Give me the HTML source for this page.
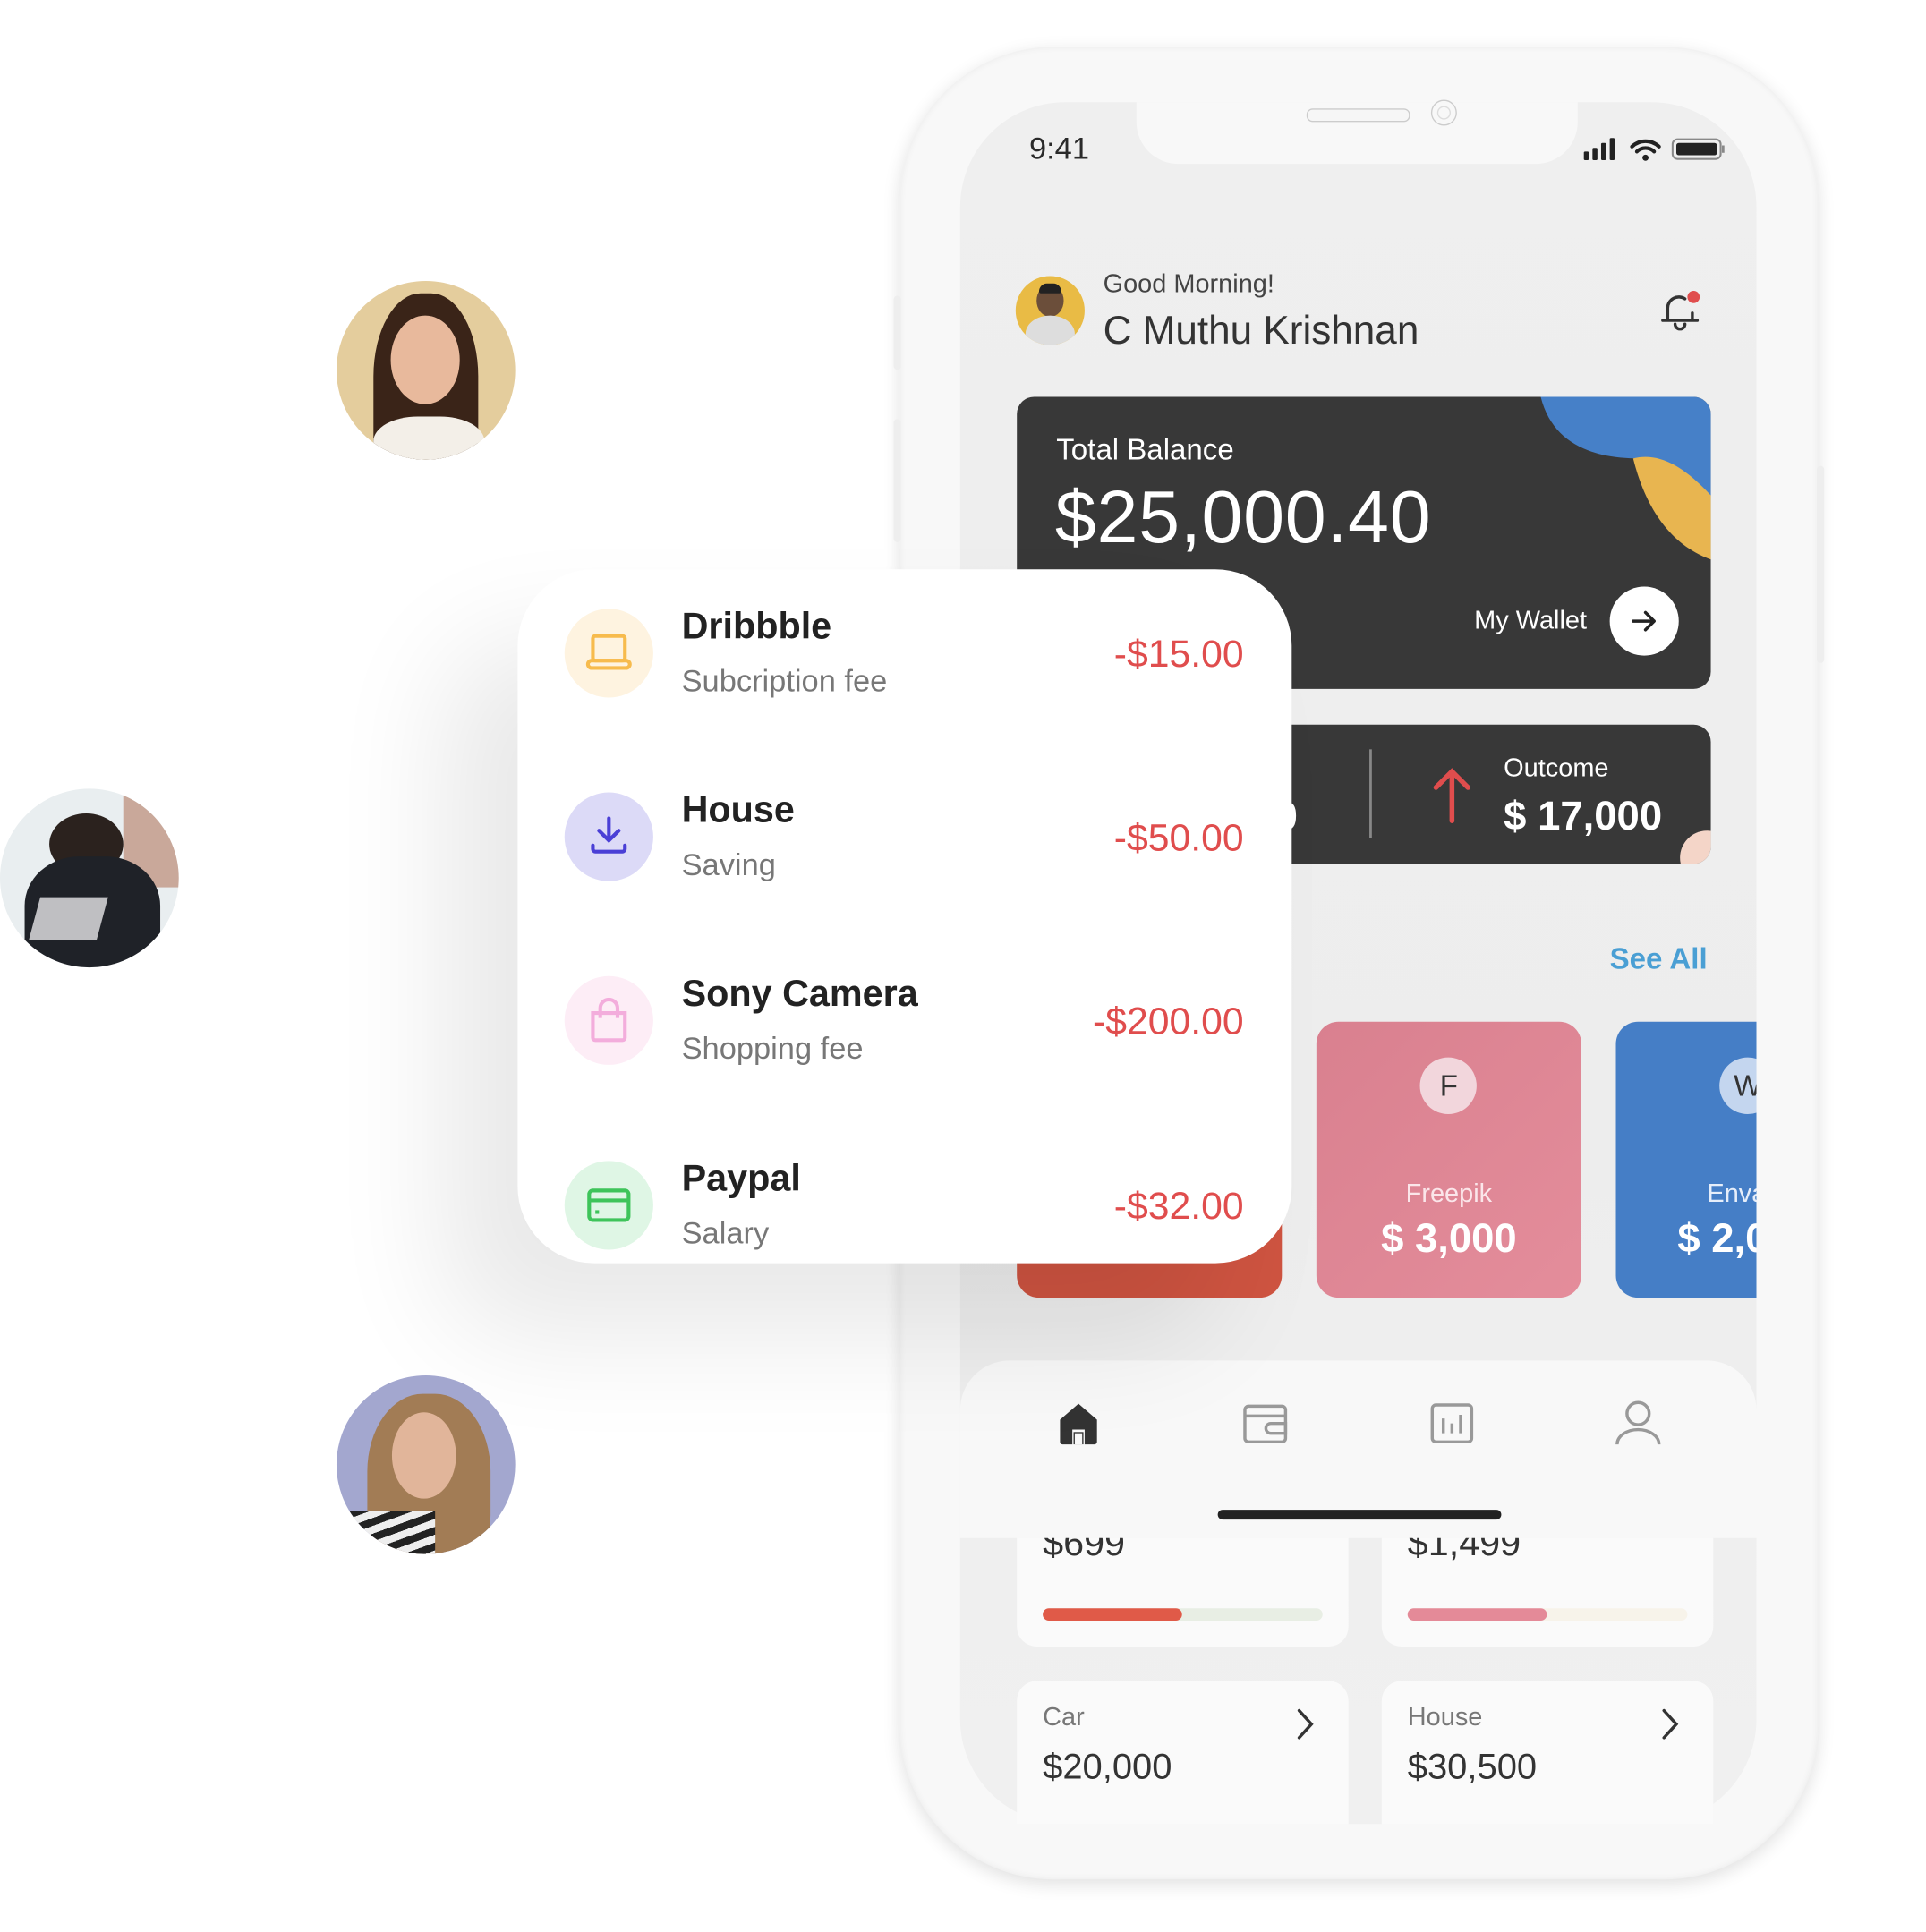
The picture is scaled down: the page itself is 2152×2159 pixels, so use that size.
<!DOCTYPE html>
<html><head><meta charset="utf-8"><style>
html,body{margin:0;padding:0;background:#fff;width:2152px;height:2159px;overflow:hidden}
#w{position:absolute;left:0;top:0;width:1563px;height:1568px;transform:scale(1.3772);transform-origin:0 0;font-family:"Liberation Sans",sans-serif}
.a{position:absolute}
.t{position:absolute;white-space:nowrap;line-height:1}
</style></head><body><div id="w">

<!-- phone -->
<div class="a" style="left:730px;top:38px;width:745px;height:1487px;border-radius:125px;background:#f8f8f8;box-shadow:0 4px 14px rgba(0,0,0,.12), inset 0 0 6px rgba(0,0,0,.06)"></div>
<div class="a" style="left:725px;top:240px;width:6px;height:60px;background:#eee;border-radius:3px"></div>
<div class="a" style="left:725px;top:340px;width:6px;height:100px;background:#eee;border-radius:3px"></div>
<div class="a" style="left:1474px;top:378px;width:6px;height:160px;background:#eee;border-radius:3px"></div>
<div class="a" style="left:779px;top:83px;width:646px;height:1397px;border-radius:85px;background:linear-gradient(180deg,#efefef,#ededed 60%,#f0f0f0);overflow:hidden">
  <div class="a" style="left:143px;top:-2px;width:358px;height:52px;background:#f8f8f8;border-radius:0 0 34px 34px"></div>
</div>
<div class="a" style="left:1060px;top:88px;width:82px;height:9px;border-radius:5px;border:1.5px solid #ccc;background:#f6f6f6"></div>
<div class="a" style="left:1161px;top:81px;width:21px;height:21px;border-radius:50%;border:1.5px solid #ccc;box-sizing:border-box"></div>
<div class="a" style="left:1166px;top:86px;width:11px;height:11px;border-radius:50%;border:1.5px solid #ddd;box-sizing:border-box"></div>

<div class="t" style="left:835px;top:109px;font-size:25px;color:#2a2a2a">9:41</div>
<svg class="a" style="left:1284px;top:110px" width="116" height="24" viewBox="0 0 116 24">
<rect x="1" y="13" width="4" height="7" rx="1" fill="#222"/><rect x="8" y="10" width="4" height="10" rx="1" fill="#222"/><rect x="15" y="6" width="4" height="14" rx="1" fill="#222"/><rect x="22" y="2" width="4" height="18" rx="1" fill="#222"/>
<path d="M40 9a16 16 0 0 1 22 0M44 13a10 10 0 0 1 14 0" stroke="#222" stroke-width="3" fill="none" stroke-linecap="round"/><circle cx="51" cy="18" r="2.5" fill="#222"/>
<rect x="73" y="3" width="39" height="16" rx="4" stroke="#888" stroke-width="1.5" fill="none"/><rect x="76" y="6" width="33" height="10" rx="2" fill="#222"/><rect x="113" y="8" width="2" height="6" fill="#888"/>
</svg>

<!-- header -->
<div class="a" style="left:824px;top:224px;width:56px;height:56px;border-radius:50%;background:#e9bb45;overflow:hidden">
  <div class="a" style="left:17px;top:7px;width:22px;height:26px;border-radius:50%;background:#6b4e3a"></div>
  <div class="a" style="left:19px;top:6px;width:18px;height:8px;border-radius:8px 8px 2px 2px;background:#222"></div>
  <div class="a" style="left:8px;top:32px;width:40px;height:30px;border-radius:50% 50% 0 0;background:#ddd"></div>
</div>
<div class="t" style="left:895px;top:220px;font-size:21px;color:#444">Good Morning!</div>
<div class="t" style="left:895px;top:252px;font-size:32px;color:#333">C Muthu Krishnan</div>
<svg class="a" style="left:1343px;top:232px" width="40" height="40" viewBox="0 0 40 40"><path d="M10 28V18a9 9 0 0 1 14-7.5M30 22v6M6 28h28M16 31a4 4 0 0 0 8 0" stroke="#333" stroke-width="2.5" fill="none" stroke-linecap="round"/><circle cx="31" cy="9" r="5" fill="#e04d4d"/></svg>

<!-- balance card -->
<div class="a" style="left:825px;top:322px;width:563px;height:237px;border-radius:14px;background:#383838;overflow:hidden">
  <svg class="a" style="left:400px;top:0" width="163" height="237" viewBox="0 0 163 237"><path d="M163 130 C140 110 120 90 105 50 C70 50 35 40 25 0 L163 0Z" fill="#4680c8"/><path d="M163 80 L163 132 C130 120 110 90 100 50 C120 45 140 55 163 80Z" fill="#e8b550"/></svg>
  <div class="t" style="left:32px;top:32px;font-size:24px;color:#fff">Total Balance</div>
  <div class="t" style="left:31px;top:68px;font-size:60px;color:#fff;letter-spacing:.5px">$25,000.40</div>
  <div class="t" style="left:371px;top:171px;font-size:21px;color:#fff">My Wallet</div>
  <div class="a" style="left:481px;top:154px;width:56px;height:56px;border-radius:50%;background:#fff"></div>
  <svg class="a" style="left:497px;top:170px" width="24" height="24" viewBox="0 0 24 24"><path d="M3 12h17M13 5l7 7-7 7" stroke="#222" stroke-width="2.5" fill="none" stroke-linecap="round" stroke-linejoin="round"/></svg>
</div>

<!-- income/outcome -->
<div class="a" style="left:825px;top:588px;width:563px;height:113px;border-radius:14px;background:#383838;overflow:hidden">
  <div class="t" style="left:210px;top:58px;font-size:32px;color:#fff;font-weight:bold">0</div>
  <div class="a" style="left:286px;top:20px;width:2px;height:72px;background:#888"></div>
  <svg class="a" style="left:335px;top:33px" width="36" height="48" viewBox="0 0 36 48"><path d="M18 45V5M5 18L18 5l13 13" stroke="#e04d4d" stroke-width="4" fill="none" stroke-linecap="round"/></svg>
  <div class="t" style="left:395px;top:25px;font-size:21px;color:#fff">Outcome</div>
  <div class="t" style="left:395px;top:57px;font-size:33px;color:#fff;font-weight:bold">$ 17,000</div>
  <div class="a" style="left:538px;top:86px;width:44px;height:44px;border-radius:50%;background:#f4d5c8"></div>
</div>

<div class="t" style="left:1306px;top:767px;font-size:24px;color:#4a9fd4;font-weight:bold">See All</div>

<!-- cards -->
<div class="a" style="left:825px;top:829px;width:215px;height:224px;border-radius:18px;background:#cf5441"></div>
<div class="a" style="left:1068px;top:829px;width:215px;height:224px;border-radius:18px;background:linear-gradient(135deg,#d9808f,#e48d9b)">
  <div class="a" style="left:84px;top:29px;width:46px;height:46px;border-radius:50%;background:#f2d6dc"></div>
  <div class="t" style="left:0;width:215px;text-align:center;top:41px;font-size:24px;color:#333">F</div>
  <div class="t" style="left:0;width:215px;text-align:center;top:129px;font-size:21px;color:#fbe6ea">Freepik</div>
  <div class="t" style="left:0;width:215px;text-align:center;top:159px;font-size:33px;color:#fff;font-weight:bold">$ 3,000</div>
</div>
<div class="a" style="left:1311px;top:829px;width:114px;height:224px;border-radius:18px 0 0 18px;background:#457ec6;overflow:hidden">
  <div class="a" style="left:84px;top:29px;width:46px;height:46px;border-radius:50%;background:#c4d6ef"></div>
  <div class="t" style="left:84px;top:41px;font-size:24px;color:#333;width:46px;text-align:center">W</div>
  <div class="t" style="left:74px;top:129px;font-size:21px;color:#e6eefa">Envato</div>
  <div class="t" style="left:50px;top:159px;font-size:33px;color:#fff;font-weight:bold">$ 2,000</div>
</div>

<!-- lower cards -->
<div class="a" style="left:825px;top:1230px;width:269px;height:106px;border-radius:0 0 16px 16px;background:#fafafa;overflow:hidden">
  <div class="t" style="left:21px;top:8px;font-size:30px;color:#333">$699</div>
  <div class="a" style="left:21px;top:75px;width:227px;height:10px;border-radius:5px;background:#e8eee4"></div>
  <div class="a" style="left:21px;top:75px;width:113px;height:10px;border-radius:5px;background:#e05a48"></div>
</div>
<div class="a" style="left:1121px;top:1230px;width:269px;height:106px;border-radius:0 0 16px 16px;background:#fafafa;overflow:hidden">
  <div class="t" style="left:21px;top:8px;font-size:30px;color:#333">$1,499</div>
  <div class="a" style="left:21px;top:75px;width:227px;height:10px;border-radius:5px;background:#f7f3ea"></div>
  <div class="a" style="left:21px;top:75px;width:113px;height:10px;border-radius:5px;background:#e48a98"></div>
</div>
<div class="a" style="left:825px;top:1364px;width:269px;height:116px;border-radius:16px 16px 0 0;background:#fafafa">
  <div class="t" style="left:21px;top:19px;font-size:21px;color:#777">Car</div>
  <div class="t" style="left:21px;top:56px;font-size:29px;color:#333">$20,000</div>
  <svg class="a" style="left:222px;top:20px" width="24" height="30" viewBox="0 0 24 30"><path d="M7 4l10 11-10 11" stroke="#333" stroke-width="2.5" fill="none" stroke-linecap="round"/></svg>
</div>
<div class="a" style="left:1121px;top:1364px;width:269px;height:116px;border-radius:16px 16px 0 0;background:#fafafa">
  <div class="t" style="left:21px;top:19px;font-size:21px;color:#777">House</div>
  <div class="t" style="left:21px;top:56px;font-size:29px;color:#333">$30,500</div>
  <svg class="a" style="left:222px;top:20px" width="24" height="30" viewBox="0 0 24 30"><path d="M7 4l10 11-10 11" stroke="#333" stroke-width="2.5" fill="none" stroke-linecap="round"/></svg>
</div>

<!-- nav -->
<div class="a" style="left:779px;top:1104px;width:646px;height:144px;border-radius:40px 40px 0 0;background:#f8f8f8;overflow:hidden">
  <svg class="a" style="left:78px;top:32px" width="36" height="38" viewBox="0 0 36 38"><path d="M3 16L18 3l15 13v18a2 2 0 0 1-2 2H23V24h-10v12H5a2 2 0 0 1-2-2Z" fill="#333"/><rect x="14" y="26" width="8" height="10" fill="#333"/><rect x="15" y="27" width="6" height="9" fill="#f8f8f8"/></svg>
  <svg class="a" style="left:228px;top:33px" width="40" height="36" viewBox="0 0 40 36"><rect x="3" y="4" width="33" height="29" rx="3" stroke="#999" stroke-width="2.5" fill="none"/><path d="M3 12h33M24 18h12v8H24a4 4 0 0 1 0-8Z" stroke="#999" stroke-width="2.5" fill="none"/></svg>
  <svg class="a" style="left:380px;top:33px" width="38" height="36" viewBox="0 0 38 36"><rect x="3" y="3" width="32" height="30" rx="3" stroke="#999" stroke-width="2.5" fill="none"/><path d="M12 14v12M19 18v8M26 11v15" stroke="#999" stroke-width="2.5"/></svg>
  <svg class="a" style="left:530px;top:30px" width="40" height="40" viewBox="0 0 40 40"><circle cx="20" cy="13" r="9" stroke="#999" stroke-width="2.5" fill="none"/><path d="M3 38a17 12 0 0 1 34 0" stroke="#999" stroke-width="2.5" fill="none"/></svg>
  <div class="a" style="left:209px;top:121px;width:230px;height:8px;border-radius:4px;background:#222"></div>
</div>

<!-- popup transactions -->
<div class="a" style="left:420px;top:462px;width:628px;height:563px;border-radius:62px;background:#fff;box-shadow:-60px 60px 120px rgba(0,0,0,.09)"></div>
<div class="a" style="left:458px;top:494px;width:72px;height:72px;border-radius:50%;background:#fef3e0"></div>
<svg class="a" style="left:474px;top:512px" width="40" height="36" viewBox="0 0 40 36"><rect x="7" y="4" width="26" height="20" rx="2" stroke="#f7bb4d" stroke-width="3" fill="none"/><rect x="3" y="24" width="34" height="6" rx="3" stroke="#f7bb4d" stroke-width="3" fill="none"/></svg>
<div class="a" style="left:458px;top:643px;width:72px;height:72px;border-radius:50%;background:#dcdaf7"></div>
<svg class="a" style="left:476px;top:660px" width="36" height="36" viewBox="0 0 36 36"><path d="M18 4v18M10 14l8 8 8-8M5 26v3a2 2 0 0 0 2 2h22a2 2 0 0 0 2-2v-3" stroke="#4a3fd6" stroke-width="3" fill="none" stroke-linecap="round"/></svg>
<div class="a" style="left:458px;top:792px;width:72px;height:72px;border-radius:50%;background:#fdedf6"></div>
<svg class="a" style="left:475px;top:808px" width="38" height="40" viewBox="0 0 38 40"><path d="M6 14h26v20a2 2 0 0 1-2 2H8a2 2 0 0 1-2-2ZM12 18v-8a7 7 0 0 1 14 0v8" stroke="#f3addc" stroke-width="3" fill="none"/></svg>
<div class="a" style="left:458px;top:942px;width:72px;height:72px;border-radius:50%;background:#dff6e5"></div>
<svg class="a" style="left:475px;top:960px" width="38" height="36" viewBox="0 0 38 36"><rect x="3" y="6" width="32" height="24" rx="3" stroke="#3ec45a" stroke-width="3" fill="none"/><path d="M3 14h32" stroke="#3ec45a" stroke-width="3"/><rect x="8" y="22" width="3" height="3" fill="#3ec45a"/></svg>

<div class="t" style="left:553px;top:494px;font-size:30px;font-weight:bold;color:#222">Dribbble</div>
<div class="t" style="left:553px;top:541px;font-size:25px;color:#777">Subcription fee</div>
<div class="t" style="left:553px;top:643px;font-size:30px;font-weight:bold;color:#222">House</div>
<div class="t" style="left:553px;top:690px;font-size:25px;color:#777">Saving</div>
<div class="t" style="left:553px;top:792px;font-size:30px;font-weight:bold;color:#222">Sony Camera</div>
<div class="t" style="left:553px;top:839px;font-size:25px;color:#777">Shopping fee</div>
<div class="t" style="left:553px;top:942px;font-size:30px;font-weight:bold;color:#222">Paypal</div>
<div class="t" style="left:553px;top:989px;font-size:25px;color:#777">Salary</div>

<div class="t" style="right:554px;top:515px;font-size:31px;color:#e04d4d">-$15.00</div>
<div class="t" style="right:554px;top:664px;font-size:31px;color:#e04d4d">-$50.00</div>
<div class="t" style="right:554px;top:813px;font-size:31px;color:#e04d4d">-$200.00</div>
<div class="t" style="right:554px;top:963px;font-size:31px;color:#e04d4d">-$32.00</div>

<!-- avatars -->
<div class="a" style="left:273px;top:228px;width:145px;height:145px;border-radius:50%;background:#e4cd9d;overflow:hidden">
  <div class="a" style="left:30px;top:10px;width:85px;height:150px;border-radius:45% 45% 20% 20%;background:#3a2418"></div>
  <div class="a" style="left:44px;top:28px;width:56px;height:72px;border-radius:50%;background:#e8b99c"></div>
  <div class="a" style="left:30px;top:110px;width:90px;height:50px;border-radius:40% 40% 0 0;background:#f3efe8"></div>
</div>
<div class="a" style="left:0;top:640px;width:145px;height:145px;border-radius:50%;background:#e9eef0;overflow:hidden">
  <div class="a" style="left:100px;top:0;width:50px;height:80px;background:#c9a89a"></div>
  <div class="a" style="left:40px;top:20px;width:60px;height:50px;border-radius:50%;background:#2b221e"></div>
  <div class="a" style="left:20px;top:55px;width:110px;height:100px;border-radius:40% 40% 0 0;background:#1f2228"></div>
  <div class="a" style="left:28px;top:88px;width:55px;height:35px;background:#bfbfc2;transform:skewX(-15deg)"></div>
</div>
<div class="a" style="left:273px;top:1116px;width:145px;height:145px;border-radius:50%;background:#a3a7cf;overflow:hidden">
  <div class="a" style="left:25px;top:15px;width:100px;height:140px;border-radius:45% 45% 30% 30%;background:#a27c55"></div>
  <div class="a" style="left:45px;top:30px;width:52px;height:70px;border-radius:50%;background:#e1b59a"></div>
  <div class="a" style="left:10px;top:110px;width:70px;height:50px;background:repeating-linear-gradient(160deg,#222 0 6px,#eee 6px 12px)"></div>
</div>

</div></body></html>
